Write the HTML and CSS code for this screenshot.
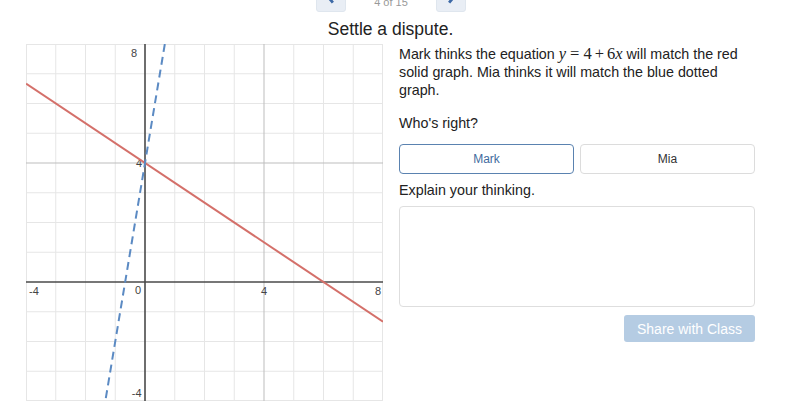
FILE: index.html
```html
<!DOCTYPE html>
<html>
<head>
    <title>Settle a dispute</title>
    <link rel="stylesheet" href="styles.css">
</head>
<body>
    <div class="page">
        <div class="nav">
            <button class="nav-btn">
                <svg width="30" height="30" viewBox="0 0 30 30"><path d="M17 9 L12 15 L17 21" fill="none" stroke="#3d69a6" stroke-width="3"/></svg>
            </button>
            <span class="nav-count">4 of 15</span>
            <button class="nav-btn">
                <svg width="30" height="30" viewBox="0 0 30 30"><path d="M13 9 L18 15 L13 21" fill="none" stroke="#3d69a6" stroke-width="3"/></svg>
            </button>
        </div>

        <h1 class="title">Settle a dispute.</h1>

        <div class="content">
            <div class="graph">
                <svg width="357" height="357" viewBox="0 0 357 357">
                    <g stroke="#e6e6e6" stroke-width="1">
                        <line x1="29.75" y1="0" x2="29.75" y2="357"/>
                        <line x1="59.5" y1="0" x2="59.5" y2="357"/>
                        <line x1="89.25" y1="0" x2="89.25" y2="357"/>
                        <line x1="148.75" y1="0" x2="148.75" y2="357"/>
                        <line x1="178.5" y1="0" x2="178.5" y2="357"/>
                        <line x1="208.25" y1="0" x2="208.25" y2="357"/>
                        <line x1="267.75" y1="0" x2="267.75" y2="357"/>
                        <line x1="297.5" y1="0" x2="297.5" y2="357"/>
                        <line x1="327.25" y1="0" x2="327.25" y2="357"/>
                        <line x1="0" y1="29.75" x2="357" y2="29.75"/>
                        <line x1="0" y1="59.5" x2="357" y2="59.5"/>
                        <line x1="0" y1="89.25" x2="357" y2="89.25"/>
                        <line x1="0" y1="148.75" x2="357" y2="148.75"/>
                        <line x1="0" y1="178.5" x2="357" y2="178.5"/>
                        <line x1="0" y1="208.25" x2="357" y2="208.25"/>
                        <line x1="0" y1="267.75" x2="357" y2="267.75"/>
                        <line x1="0" y1="297.5" x2="357" y2="297.5"/>
                        <line x1="0" y1="327.25" x2="357" y2="327.25"/>
                        <rect x="0.5" y="0.5" width="356" height="356" fill="none"/>
                    </g>
                    <g stroke="#bdbdbd" stroke-width="1">
                        <line x1="238" y1="0" x2="238" y2="357"/>
                        <line x1="0" y1="119" x2="357" y2="119"/>
                    </g>
                    <g stroke="#4a4a4a" stroke-width="1.6">
                        <line x1="119" y1="0" x2="119" y2="357"/>
                        <line x1="0" y1="238" x2="357" y2="238"/>
                    </g>
                    <g font-family="Liberation Sans, Arial, sans-serif" font-size="11" fill="#444">
                        <text x="111" y="13" text-anchor="end">8</text>
                        <text x="116" y="123" text-anchor="end">4</text>
                        <text x="115" y="250" text-anchor="end">0</text>
                        <text x="3" y="251">-4</text>
                        <text x="238" y="251" text-anchor="middle">4</text>
                        <text x="355" y="251" text-anchor="end">8</text>
                        <text x="115.5" y="353" text-anchor="end">-4</text>
                    </g>
                    <line x1="0" y1="39.67" x2="357" y2="277.67" stroke="#d4706a" stroke-width="2"/>
                    <line x1="138.83" y1="0" x2="79.33" y2="357" stroke="#5b8ac3" stroke-width="2" stroke-dasharray="8 5"/>
                </svg>
            </div>

            <div class="panel">
                <p class="prompt">Mark thinks the equation <span class="math"><i>y</i><span class="op eq">=</span>4<span class="op">+</span>6<i>x</i></span> will match the red solid graph. Mia thinks it will match the blue dotted graph.</p>
                <p class="question">Who's right?</p>
                <div class="choices">
                    <button class="choice selected">Mark</button>
                    <button class="choice">Mia</button>
                </div>
                <p class="question explain">Explain your thinking.</p>
                <textarea class="answer"></textarea>
                <div class="actions">
                    <button class="share-btn">Share with Class</button>
                </div>
            </div>
        </div>
    </div>
</body>
</html>
```

FILE: styles.css
```css
/* Page */
body {
    margin: 0;
    font-family: "Liberation Sans", Arial, sans-serif;
    color: #222;
    background: #fff;
    overflow: hidden;
}

.page {
    width: 729px;
    margin-left: 26px;
}

/* Top navigation (scrolled partly out of view) */
.nav {
    display: flex;
    justify-content: center;
    align-items: flex-end;
    gap: 28px;
    height: 30px;
    margin-top: -18px;
    padding-left: 1px;
}

.nav-btn {
    width: 30px;
    height: 30px;
    padding: 0;
    border: 1px solid #dfe6ee;
    border-radius: 3px;
    background: #e9eef5;
    display: flex;
    align-items: center;
    justify-content: center;
}

.nav-count {
    font-size: 11px;
    line-height: 13px;
    margin-bottom: 3px;
    color: #999;
}

.title {
    margin: 6px 0 4px;
    font-size: 17.5px;
    line-height: 22px;
    font-weight: normal;
    text-align: center;
    color: #222;
}

/* Graph + question */
.content {
    display: flex;
    gap: 16px;
}

.graph {
    width: 357px;
    height: 357px;
}

.graph svg {
    display: block;
}

.panel {
    width: 356px;
    padding-top: 1px;
    display: flex;
    flex-direction: column;
}

.prompt, .question {
    margin: 0;
    font-size: 14.3px;
    line-height: 18px;
    color: #222;
}

.question {
    margin-top: 15px;
}

.question.explain {
    margin-top: 7px;
}

.math {
    font-family: "Liberation Serif", "Times New Roman", serif;
    font-size: 16.5px;
    line-height: 1;
}

.math .op {
    margin: 0 3px;
}

.math .op.eq {
    margin: 0 4px;
}

.choices {
    display: flex;
    gap: 6px;
    margin-top: 12px;
}

.choice {
    flex: 1;
    height: 30px;
    background: #fff;
    border: 1px solid #dcdcdc;
    border-radius: 4px;
    font-family: "Liberation Sans", Arial, sans-serif;
    font-size: 12px;
    color: #333;
}

.choice.selected {
    border-color: #5a82b0;
    color: #3f6b9e;
}

.answer {
    margin-top: 7px;
    height: 101px;
    box-sizing: border-box;
    border: 1px solid #dedede;
    border-radius: 4px;
    resize: none;
    font-family: "Liberation Sans", Arial, sans-serif;
}

.actions {
    display: flex;
    justify-content: flex-end;
    margin-top: 8px;
}

.share-btn {
    width: 131px;
    height: 27px;
    border: none;
    border-radius: 3px;
    background: #b5cce3;
    color: #fff;
    font-family: "Liberation Sans", Arial, sans-serif;
    font-size: 14px;
}
```
